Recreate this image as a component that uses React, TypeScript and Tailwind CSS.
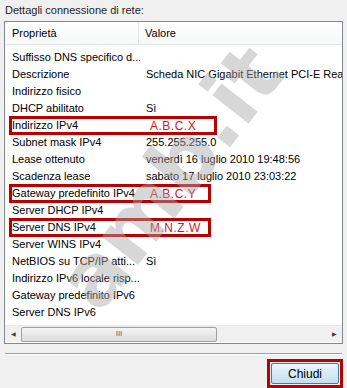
import React from 'react'

type Row = { label: string; value?: string; mark?: 'wide' | 'short' }

const ROWS: Row[] = [
  { label: 'Suffisso DNS specifico d...' },
  { label: 'Descrizione', value: 'Scheda NIC Gigabit Ethernet PCI-E Realtek' },
  { label: 'Indirizzo fisico' },
  { label: 'DHCP abilitato', value: 'Sì' },
  { label: 'Indirizzo IPv4', value: 'A.B.C.X', mark: 'wide' },
  { label: 'Subnet mask IPv4', value: '255.255.255.0' },
  { label: 'Lease ottenuto', value: 'venerdì 16 luglio 2010 19:48:56' },
  { label: 'Scadenza lease', value: 'sabato 17 luglio 2010 23:03:22' },
  { label: 'Gateway predefinito IPv4', value: 'A.B.C.Y', mark: 'short' },
  { label: 'Server DHCP IPv4' },
  { label: 'Server DNS IPv4', value: 'M.N.Z.W', mark: 'short' },
  { label: 'Server WINS IPv4' },
  { label: 'NetBIOS su TCP/IP atti...', value: 'Sì' },
  { label: 'Indirizzo IPv6 locale risp...' },
  { label: 'Gateway predefinito IPv6' },
  { label: 'Server DNS IPv6' },
]

export default function App() {
  return (
    <div className="relative w-[347px] h-[388px] overflow-hidden bg-[#f0f0f0] text-[11px] text-black font-['Liberation_Sans',Arial,sans-serif]">
      <div className="h-[21px] pl-[5px] pt-[3px] leading-[14px] text-[#1e1e1e]">Dettagli connessione di rete:</div>

      <div className="mx-[4px] h-[323px] border border-[#828790] bg-white flex flex-col overflow-hidden">
        <div className="h-[23px] flex items-stretch border-b border-[#e5e5e5] bg-gradient-to-b from-white to-[#f7f8f9]">
          <div className="w-[134px] pl-[7px] flex items-center border-r border-[#e3e3e3]">Proprietà</div>
          <div className="pl-[6px] flex items-center">Valore</div>
        </div>

        <div className="pt-[4px] flex-1">
          {ROWS.map(r => (
            <div key={r.label} className="relative h-[17px] flex items-center whitespace-nowrap">
              <div className="w-[135px] shrink-0 pl-[7px] overflow-hidden">{r.label}</div>
              {r.value && (
                <div className={r.mark ? 'pl-[10px] text-[12px] text-[#d0181c] tracking-[0.5px]' : 'pl-[6px]'}>{r.value}</div>
              )}
              {r.mark && (
                <div
                  className={`absolute left-[4px] top-[-1px] h-[19px] border-[3px] border-[#b80000] ${
                    r.mark === 'wide' ? 'w-[208px]' : 'w-[202px]'
                  }`}
                />
              )}
            </div>
          ))}
        </div>

        <div className="h-[17px] mb-[1px] flex items-center bg-[#f0f0f0] border-t border-[#e8e8e8]">
          <div className="w-[16px] flex justify-center text-[#404040] text-[6px]">◀</div>
          <div className="w-[196px] h-[15px] rounded-[2px] border border-[#a0a0a0] bg-gradient-to-b from-[#f4f4f4] to-[#dcdcdc] flex items-center justify-center text-[8px] text-[#606060]">III</div>
          <div className="flex-1" />
          <div className="w-[16px] flex justify-center text-[#404040] text-[6px]">▶</div>
        </div>
      </div>

      <div className="mt-[9px] mx-[5px] h-[2px] border-t border-[#a0a0a0] border-b border-b-white" />

      <div className="mt-[4px] pr-[4px] flex justify-end">
        <div className="w-[76px] h-[29px] border-[3px] border-[#b80000] p-[1px]">
          <div className="h-full rounded-[2px] border border-[#3c7fb1] bg-gradient-to-b from-[#eaf6fd] to-[#c4dff0] flex items-center justify-center text-[12px] text-black">
            Chiudi
          </div>
        </div>
      </div>

      <div className="pointer-events-none absolute left-[10px] top-[135px] w-[320px] text-center origin-center -rotate-[52deg] whitespace-nowrap text-[84px] leading-none font-bold text-[#a8a8a8] opacity-45 font-['DejaVu_Sans',sans-serif]">
        amb.it
      </div>
    </div>
  )
}
